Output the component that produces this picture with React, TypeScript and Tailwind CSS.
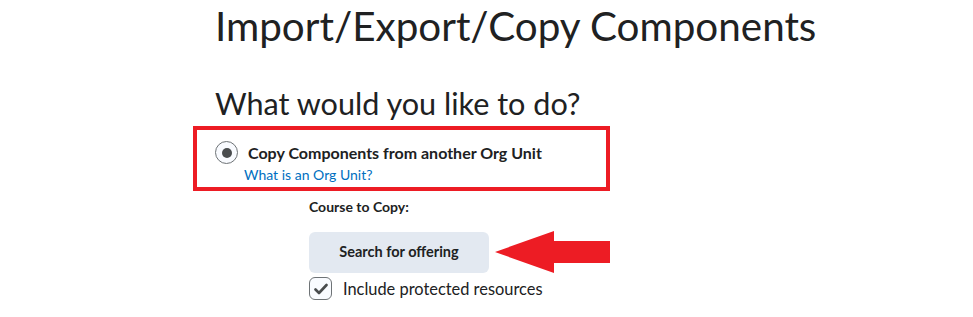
export default function App() {
  return (
    <div className="w-[973px] h-[317px] overflow-hidden bg-white font-['Lato',sans-serif] text-[#202122] pl-[215px]">
      {/* Page title */}
      <h1 className="text-[40.4px] leading-[50px] pt-[1px]">Import/Export/Copy Components</h1>

      <h2 className="text-[30.6px] leading-[34px] mt-[36px]">What would you like to do?</h2>

      {/* Highlighted option */}
      <div className="mt-[5px] -ml-[22px] w-[417px] h-[65px] border-4 border-[#ed1c24] pl-[18px] pt-[11px]">
        <div className="flex items-center">
          <span className="w-[23px] h-[23px] rounded-full border border-[#6e7376] bg-[#f9fbff] flex items-center justify-center">
            <span className="w-[10px] h-[10px] rounded-full bg-[#494c4e]" />
          </span>
          <span className="ml-[10px] text-[16px] font-bold leading-[20px]">Copy Components from another Org Unit</span>
        </div>
        <a className="block ml-[29px] mt-[2px] text-[14px] leading-[18px] text-[#006fbf]">What is an Org Unit?</a>
      </div>

      {/* Course picker */}
      <div className="pl-[94px]">
        <div className="mt-[7px] text-[14px] font-bold leading-[18px]">Course to Copy:</div>
        <div className="flex items-center mt-[15px]">
          <button className="w-[180px] h-[41px] rounded-[6px] bg-[#e3e9f1] text-[14.5px] font-bold">Search for offering</button>
          <svg width="116" height="42" viewBox="0 0 116 42" className="ml-[6px]">
            <polygon points="0,21 59,0 59,10 115,10 115,32 59,32 59,42" fill="#ed1c24" />
          </svg>
        </div>
        <label className="flex items-center mt-[4px]">
          <span className="w-[23px] h-[23px] rounded-[6px] border border-[#6e7376] bg-[#f9fbff] flex items-center justify-center">
            <svg width="14" height="12" viewBox="0 0 14 12">
              <path d="M1.5 6.5 L5 10 L12.5 2" fill="none" stroke="#494c4e" strokeWidth="2.6" strokeLinecap="round" strokeLinejoin="round" />
            </svg>
          </span>
          <span className="ml-[11px] text-[16.4px] leading-[20px]">Include protected resources</span>
        </label>
      </div>
    </div>
  );
}
